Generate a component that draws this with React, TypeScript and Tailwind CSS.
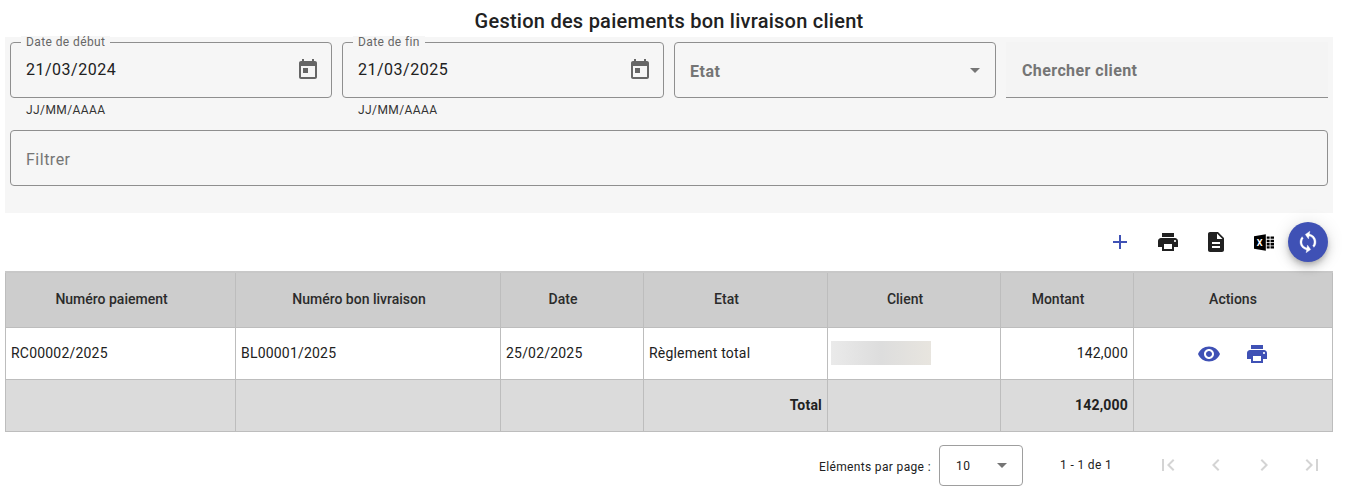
const roboto = "font-['Roboto',sans-serif]";

function MIcon({ d, className }: { d: string; className: string }) {
  return (
    <svg viewBox="0 0 24 24" fill="currentColor" className={className}>
      <path d={d} />
    </svg>
  );
}

const CAL = "M19 3h-1V1h-2v2H8V1H6v2H5c-1.11 0-1.99.9-1.99 2L3 19c0 1.1.89 2 2 2h14c1.1 0 2-.9 2-2V5c0-1.1-.9-2-2-2zm0 16H5V8h14v11zM7 10h5v5H7z";
const PRINT = "M19 8H5c-1.66 0-3 1.34-3 3v6h4v4h12v-4h4v-6c0-1.66-1.34-3-3-3zm-3 11H8v-5h8v5zm3-7c-.55 0-1-.45-1-1s.45-1 1-1 1 .45 1 1-.45 1-1 1zm-1-9H6v4h12V3z";
const DOC = "M14 2H6c-1.1 0-1.99.9-1.99 2L4 20c0 1.1.89 2 1.99 2H18c1.1 0 2-.9 2-2V8l-6-6zm2 16H8v-2h8v2zm0-4H8v-2h8v2zm-3-5V3.5L18.5 9H13z";
const EYE = "M12 4.5C7 4.5 2.73 7.61 1 12c1.73 4.39 6 7.5 11 7.5s9.27-3.11 11-7.5c-1.73-4.39-6-7.5-11-7.5zM12 17c-2.76 0-5-2.24-5-5s2.24-5 5-5 5 2.24 5 5-2.24 5-5 5zm0-8c-1.66 0-3 1.34-3 3s1.34 3 3 3 3-1.34 3-3-1.34-3-3-3z";
const SYNC = "M12 4V1L8 5l4 4V6c3.31 0 6 2.69 6 6 0 1.01-.25 1.97-.7 2.8l1.46 1.46C19.54 15.03 20 13.57 20 12c0-4.42-3.58-8-8-8zm0 14c-3.31 0-6-2.69-6-6 0-1.01.25-1.97.7-2.8L5.24 7.74C4.46 8.97 4 10.43 4 12c0 4.42 3.58 8 8 8v3l4-4-4-4v3z";
const PLUS = "M19 13h-6v6h-2v-6H5v-2h6V5h2v6h6v2z";

function DateField({ label, value }: { label: string; value: string }) {
  return (
    <div className="w-[322px] shrink-0">
      <div className="relative h-[56px] rounded-[4px] border border-[#8f8f8f] pl-[15px] pr-[11px] flex items-center justify-between">
        <span className="absolute left-[10px] -top-[7px] px-[5px] bg-[#f6f6f6] text-[12px] leading-[12px] text-[#666] tracking-[0.4px]">{label}</span>
        <span className="text-[16px] text-[#212121] tracking-[0.5px]">{value}</span>
        <MIcon d={CAL} className="w-[24px] h-[24px] text-[#666]" />
      </div>
      <div className="pl-[16px] pt-[5px] text-[12px] leading-[14px] text-[#333] tracking-[0.4px]">JJ/MM/AAAA</div>
    </div>
  );
}

const widths = [230, 265, 143, 184, 173, 133, 199];
const heads = ["Numéro paiement", "Numéro bon livraison", "Date", "Etat", "Client", "Montant"];
const cell = "border border-[#bdbdbd] text-[14px] text-[#212121] tracking-[0.2px] p-0 px-[5px]";
const head = "border border-[#bdbdbd] text-[14px] font-medium text-center text-[#2b2b2b] p-0";

export default function App() {
  return (
    <div className={`${roboto} w-[1348px] h-[496px] bg-white overflow-hidden`}>
      <h1 className="h-[37px] pt-[8px] text-center text-[20px] leading-[26px] font-medium text-[#212121] tracking-[0.25px] pr-[10px]">
        Gestion des paiements bon livraison client
      </h1>
      <div className="ml-[5px] w-[1328px] h-[176px] bg-[#f6f6f6] px-[5px] pt-[5px]">
        <div className="flex gap-[10px] h-[56px] overflow-visible">
          <DateField label="Date de début" value="21/03/2024" />
          <DateField label="Date de fin" value="21/03/2025" />
          <div className="w-[322px] shrink-0 h-[56px] rounded-[4px] border border-[#8f8f8f] pl-[15px] pr-[15px] flex items-center justify-between">
            <span className="text-[16px] font-bold text-[#757575] tracking-[0.5px] pt-[4px]">Etat</span>
            <span className="w-0 h-0 border-x-[5px] border-x-transparent border-t-[5px] border-t-[#757575]" />
          </div>
          <div className="w-[322px] shrink-0 h-[56px] bg-[#f4f4f4] border-b border-[#8f8f8f] pl-[16px] flex items-center">
            <span className="text-[16px] font-bold text-[#757575] tracking-[0.4px] pt-[2px]">Chercher client</span>
          </div>
        </div>
        <div className="mt-[32px] h-[56px] w-[1318px] rounded-[4px] border border-[#8f8f8f] pl-[15px] pt-[4px] flex items-center text-[16px] text-[#757575] tracking-[0.5px]">
          Filtrer
        </div>
      </div>
      <div className="h-[58px] flex items-center justify-end pr-[20px]">
        <MIcon d={PLUS} className="w-[24px] h-[24px] text-[#3f51b5] mr-[24px]" />
        <MIcon d={PRINT} className="w-[24px] h-[24px] text-[#212121] mr-[24px]" />
        <MIcon d={DOC} className="w-[24px] h-[24px] text-[#212121] mr-[26px]" />
        <svg viewBox="0 0 22 18" className="w-[20px] h-[17px] mr-[14px]" fill="#000">
          <path d="M0 2 13 0v18L0 16z" />
          <path d="M14 2.5h3.2v2.4H14zM18.2 2.5H22v2.4h-3.8zM14 6h3.2v2.6H14zM18.2 6H22v2.6h-3.8zM14 9.6h3.2v2.6H14zM18.2 9.6H22v2.6h-3.8zM14 13.2h3.2v2.4H14zM18.2 13.2H22v2.4h-3.8z" />
          <text x="3" y="12.5" fontSize="10" fontWeight="700" fill="#fff" fontFamily="Roboto">X</text>
        </svg>
        <div className="w-[40px] h-[40px] rounded-full bg-[#3f51b5] flex items-center justify-center shadow-[0_3px_5px_-1px_rgba(0,0,0,0.2),0_6px_10px_0_rgba(0,0,0,0.14),0_1px_18px_0_rgba(0,0,0,0.12)] mt-[-1px]">
          <svg viewBox="0 0 24 24" fill="currentColor" stroke="currentColor" strokeWidth="0.3" className="w-[24px] h-[24px] text-white rotate-[10deg]">
            <path d={SYNC} />
          </svg>
        </div>
      </div>
      <table className="ml-[5px] w-[1328px] table-fixed border-collapse border-t-2 border-[#c8c8c8]">
        <colgroup>
          {widths.map((w, i) => (
            <col key={i} style={{ width: w }} />
          ))}
        </colgroup>
        <thead>
          <tr className="h-[55px] bg-[#cdcdcd]">
            {heads.map((h) => (
              <th key={h} className={`${head} pr-[18px]`}>{h}</th>
            ))}
            <th className={head}>Actions</th>
          </tr>
        </thead>
        <tbody>
          <tr className="h-[52px] bg-white">
            <td className={cell}>RC00002/2025</td>
            <td className={cell}>BL00001/2025</td>
            <td className={cell}>25/02/2025</td>
            <td className={cell}>Règlement total</td>
            <td className={cell}>
              <div className="w-[100px] h-[24px] -ml-[2px] bg-gradient-to-r from-[#eaeaea] via-[#dddddd] to-[#e8e5df] blur-[0.5px]" />
            </td>
            <td className={`${cell} text-right`}>142,000</td>
            <td className={cell}>
              <div className="flex items-center justify-center gap-[24px] pt-[1px]">
                <MIcon d={EYE} className="w-[24px] h-[24px] text-[#3f51b5]" />
                <MIcon d={PRINT} className="w-[24px] h-[24px] text-[#3f51b5]" />
              </div>
            </td>
          </tr>
          <tr className="h-[52px] bg-[#dbdbdb]">
            <td className={cell} />
            <td className={cell} />
            <td className={cell} />
            <td className={`${cell} text-right font-bold`}>Total</td>
            <td className={cell} />
            <td className={`${cell} text-right font-bold`}>142,000</td>
            <td className={cell} />
          </tr>
        </tbody>
      </table>
      <div className="flex items-center h-[42px] mt-[13px] text-[12px] text-[#212121] tracking-[0.35px]">
        <span className="ml-[819px] w-[120px] pt-[2px]">Eléments par page :</span>
        <div className="w-[84px] h-[41px] rounded-[4px] border border-[#9e9e9e] flex items-center justify-between pl-[16px] pr-[15px] tracking-[0.4px]">
          <span>10</span>
          <span className="w-0 h-0 border-x-[5px] border-x-transparent border-t-[5px] border-t-[#757575]" />
        </div>
        <span className="ml-[37px] w-[96px] -mt-[1px]">1 - 1 de 1</span>
        <div className="flex items-center text-[#d4d4d4] -mt-[1px] gap-[24px]">
          <MIcon d="M18.41 16.59 13.82 12l4.59-4.59L17 6l-6 6 6 6zM6 6h2v12H6z" className="w-[24px] h-[24px]" />
          <MIcon d="M15.41 7.41 14 6l-6 6 6 6 1.41-1.41L10.83 12z" className="w-[24px] h-[24px]" />
          <MIcon d="M10 6 8.59 7.41 13.17 12l-4.58 4.59L10 18l6-6z" className="w-[24px] h-[24px]" />
          <MIcon d="M5.59 7.41 10.18 12l-4.59 4.59L7 18l6-6-6-6zM16 6h2v12h-2z" className="w-[24px] h-[24px]" />
        </div>
      </div>
    </div>
  );
}
